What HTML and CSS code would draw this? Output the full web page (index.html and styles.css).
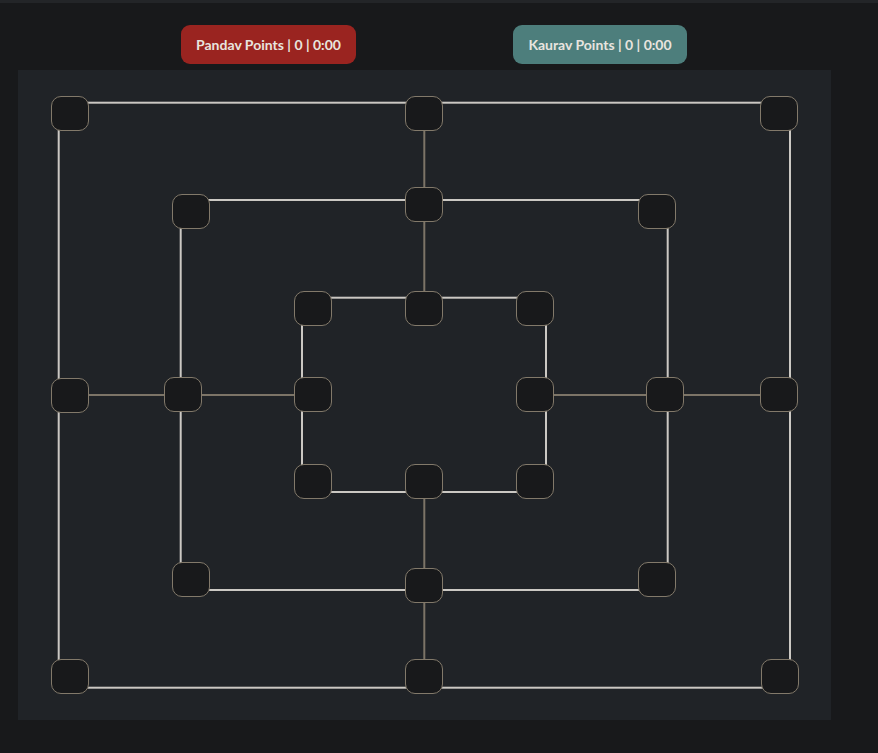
FILE: index.html
```html
<!DOCTYPE html>
<html lang="en">
<head>
    <meta charset="UTF-8">
    <meta name="viewport" content="width=device-width, initial-scale=1.0">
    <title>Nine Men's Morris</title>
    <link rel="stylesheet" href="styles.css">
</head>
<body>
    <div class="topbar"></div>

    <div class="scores">
        <div class="score pandav"><p>Pandav Points | <span id="pandavPoints">0</span> | <span id="pandavTime">0:00</span></p></div>
        <div class="score kaurav"><p>Kaurav Points | <span id="kauravPoints">0</span> | <span id="kauravTime">0:00</span></p></div>
    </div>

    <div class="board" id="board">
        <svg class="lines" width="813" height="650" viewBox="0 0 813 650">
            <!-- connectors between the rings -->
            <g class="connector">
                <line x1="40.7" y1="325" x2="284" y2="325" />
                <line x1="528" y1="325" x2="772" y2="325" />
                <line x1="406.3" y1="32.7" x2="406.3" y2="227.7" />
                <line x1="406.3" y1="422" x2="406.3" y2="617.7" />
            </g>
            <!-- the three rings -->
            <g class="ring">
                <rect x="40.7" y="32.7" width="731.3" height="585" />
                <rect x="162.7" y="130" width="487" height="390" />
                <rect x="284" y="227.7" width="244" height="194.3" />
            </g>
        </svg>
    </div>

    <script>
        // Spots on the board, relative to the board's corner
        const spots = [
            // outer ring
            [33, 26], [387, 26], [742, 26],
            [33, 308], [742, 307],
            [33, 589], [387, 589], [743, 589],
            // middle ring
            [154, 124], [387, 117], [620, 124],
            [146, 307], [628, 307],
            [154, 492], [387, 498], [620, 492],
            // inner ring
            [276, 221], [387, 221], [498, 221],
            [276, 307], [498, 307],
            [276, 394], [387, 394], [498, 394]
        ];

        const board = document.getElementById('board');

        spots.forEach(function (spot, i) {
            const cell = document.createElement('div');
            cell.className = 'spot';
            cell.dataset.index = i;
            cell.style.left = spot[0] + 'px';
            cell.style.top = spot[1] + 'px';
            board.appendChild(cell);
        });
    </script>
</body>
</html>
```

FILE: styles.css
```css
body {
    background-color: #18191b;
    font-family: 'Lato', 'Open Sans', sans-serif;
    color: #e8e4df;
    margin: 0;
    padding: 0;
}

.topbar {
    height: 3px;
    background-color: #232528;
}

.scores {
    display: flex;
    gap: 157px;
    margin-top: 22px;
    padding-left: 181px;
}

.score {
    width: 175px;
    height: 39px;
    box-sizing: border-box;
    border-radius: 9px;
    font-size: 14px;
    font-weight: bold;
    display: flex;
    align-items: center;
    justify-content: center;
    white-space: nowrap;
}

.score p {
    margin: 0;
}

.pandav {
    background-color: #9a2420;
}

.kaurav {
    width: 174px;
    background-color: #4d7e7c;
}

.board {
    position: relative;
    width: 813px;
    height: 650px;
    margin-top: 6px;
    margin-left: 18px;
    background-color: #202327;
}

.lines {
    display: block;
}

.lines line,
.lines rect {
    fill: none;
    stroke-width: 2;
}

.connector line {
    stroke: #7c7467;
}

.ring rect {
    stroke: #cbc8c3;
}

.spot {
    position: absolute;
    width: 38px;
    height: 35px;
    box-sizing: border-box;
    background-color: #18191b;
    border: 1.5px solid #82796a;
    border-radius: 10px;
    cursor: pointer;
}

.spot:hover {
    border-color: #b5a98f;
}
```
